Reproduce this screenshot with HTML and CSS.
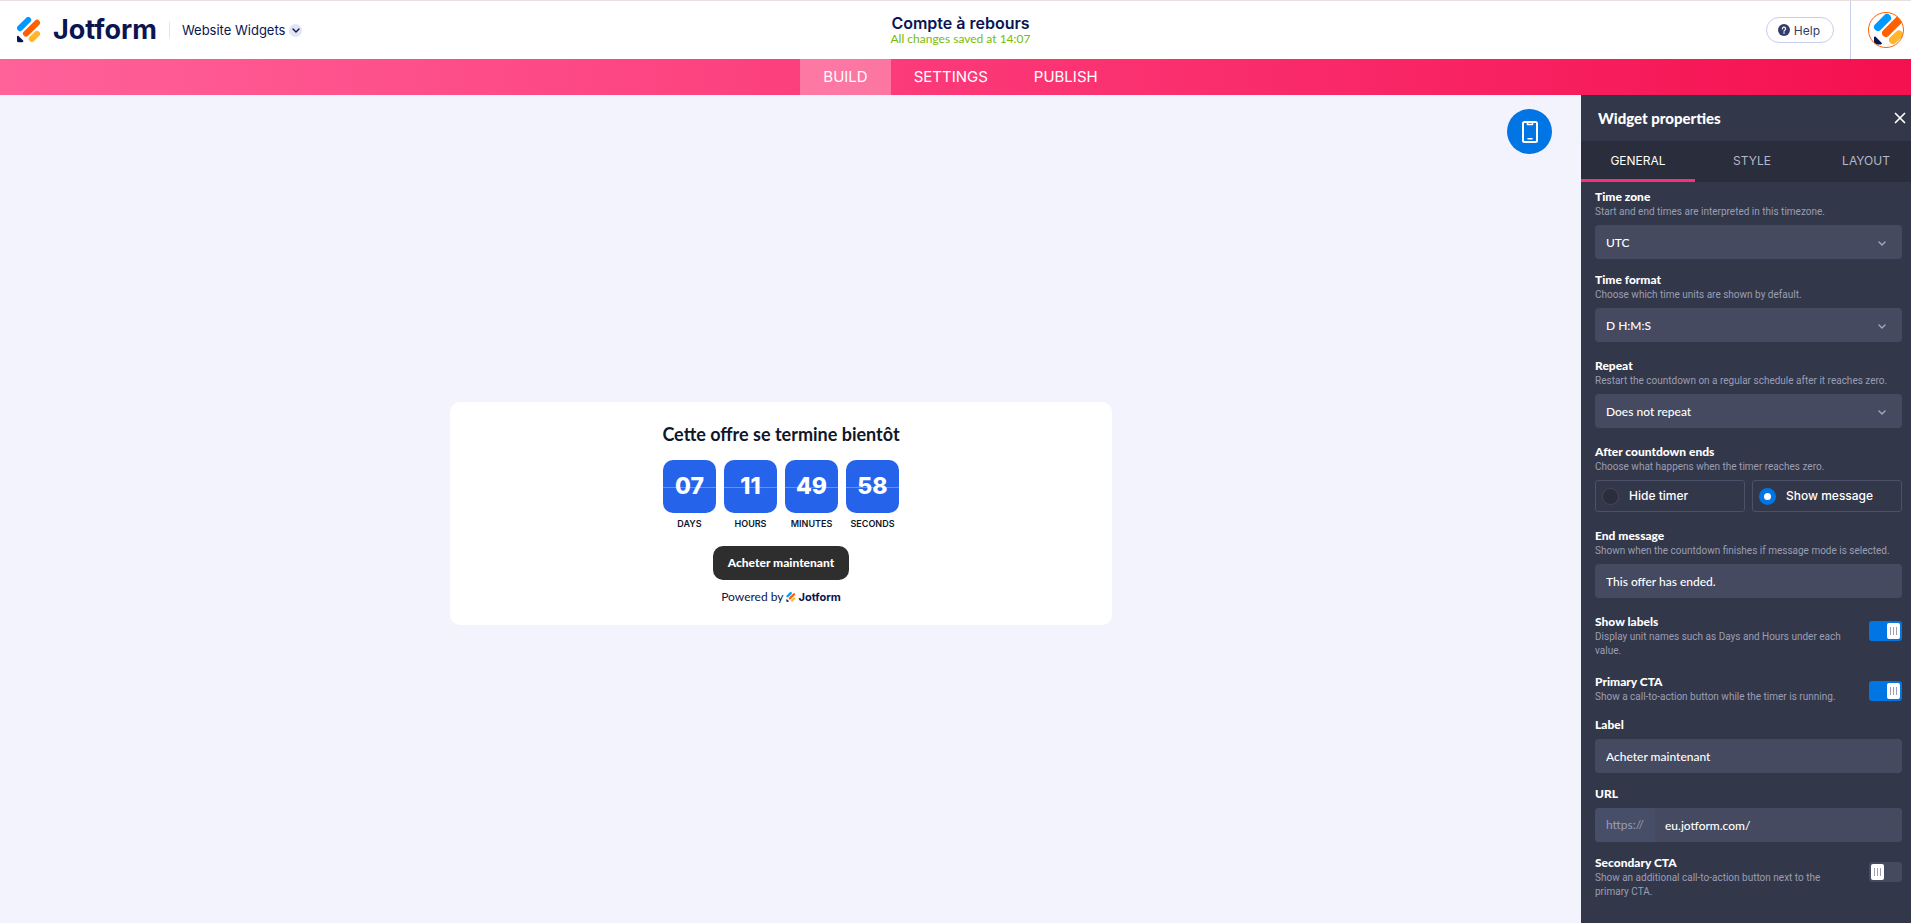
FILE: index.html
```html
<!DOCTYPE html>
<html lang="en">
<head>
  <meta charset="UTF-8" />
  <meta name="viewport" content="width=device-width, initial-scale=1.0"/>
  <title>Compte à rebours - Website Widgets</title>
  <link rel="stylesheet" href="styles.css">
</head>
<body>

  <svg class="sprite" aria-hidden="true">
    <symbol id="logo-mark" viewBox="0 0 24 26">
      <g fill="none" stroke-width="6" stroke-linecap="round">
        <path stroke="#0099ff" d="M3 11.2 11.2 3"/>
        <path stroke="#ff6100" d="M9 16.6 20 5.8"/>
        <path stroke="#ffb629" d="M14.8 22 20 16.9"/>
      </g>
      <path fill="#0a1551" d="M0 19.6c0-.8.9-1.2 1.500-.6l4.600 4.600c.6.6.2 1.600-.7 1.600H1.400C.6 25.200 0 24.600 0 23.800z"/>
    </symbol>
    <symbol id="chevron" viewBox="0 0 12 12">
      <path d="M3 5 6 8 9 5" fill="none" stroke="currentColor" stroke-width="1.400" stroke-linecap="round" stroke-linejoin="round"/>
    </symbol>
  </svg>

  <header>
    <div class="header-left">
      <a class="logo" href="#"><svg width="24" height="26"><use href="#logo-mark"/></svg>Jotform</a>
      <button class="product-menu">Website Widgets <span><svg width="12" height="12"><use href="#chevron"/></svg></span></button>
    </div>
    <div class="header-title">
      <h1>Compte à rebours</h1>
      <p>All changes saved at 14:07</p>
    </div>
    <div class="header-right">
      <button class="help-btn">
        <svg width="12" height="12" viewBox="0 0 12 12"><circle cx="6" cy="6" r="6" fill="#343c6a"/><path d="M4.400 4.800a1.600 1.600 0 1 1 2.300 1.400c-.5.3-.7.5-.7 1" fill="none" stroke="#fff" stroke-width="1.200" stroke-linecap="round"/><circle cx="6" cy="9" r=".8" fill="#fff"/></svg>
        Help
      </button>
      <a class="account" href="#" aria-label="Account">
        <svg width="36" height="36" viewBox="0 0 36 36">
          <defs><clipPath id="round"><circle cx="18" cy="18" r="17.500"/></clipPath></defs>
          <g clip-path="url(#round)" fill="none" stroke-width="8" stroke-linecap="round">
            <path stroke="#0099ff" d="M10 15 19 6"/>
            <path stroke="#ff6100" d="M18 21 32 7"/>
            <path stroke="#ffb629" d="M25 28 31 22.500"/>
            <path fill="#0a1551" stroke="none" d="M6 25.500c0-1 1-1.300 1.600-.7l6 6c.7.7.2 1.700-.8 1.700H6z"/>
          </g>
          <circle cx="18" cy="18" r="17.500" fill="none" stroke="#ff6100"/>
        </svg>
      </a>
    </div>
  </header>

  <nav class="main-nav">
    <a href="#" class="active">BUILD</a>
    <a href="#">SETTINGS</a>
    <a href="#">PUBLISH</a>
  </nav>

  <div class="workspace">
    <main class="canvas">
      <button class="preview-btn" aria-label="Mobile preview">
        <svg width="18" height="24" viewBox="0 0 18 24" fill="none" stroke="#fff" stroke-width="2" stroke-linecap="round" stroke-linejoin="round">
          <rect x="2" y="2" width="14" height="20" rx="1.500"/>
          <path d="M6.500 3v1.500h5V3M7 18.800h4" stroke-width="1.500"/>
        </svg>
      </button>

      <section class="widget">
        <h2>Cette offre se termine bientôt</h2>
        <div class="countdown">
          <div class="unit"><div class="tile">07</div><div class="unit-name">DAYS</div></div>
          <div class="unit"><div class="tile">11</div><div class="unit-name">HOURS</div></div>
          <div class="unit"><div class="tile">49</div><div class="unit-name">MINUTES</div></div>
          <div class="unit"><div class="tile">58</div><div class="unit-name">SECONDS</div></div>
        </div>
        <button class="cta">Acheter maintenant</button>
        <p class="powered">Powered by <a href="#"><svg width="10" height="10"><use href="#logo-mark"/></svg>Jotform</a></p>
      </section>
    </main>

    <aside class="panel">
      <div class="panel-header">
        <h2>Widget properties</h2>
        <button class="close-btn" aria-label="Close">
          <svg width="12" height="12" viewBox="0 0 12 12"><path d="M1.500 1.500l9 9M10.500 1.500l-9 9" stroke="#fff" stroke-width="1.700" stroke-linecap="round"/></svg>
        </button>
      </div>
      <div class="tabs">
        <button class="active">GENERAL</button>
        <button>STYLE</button>
        <button>LAYOUT</button>
      </div>

      <form class="fields">
        <div class="field tight">
          <label for="timezone">Time zone</label>
          <p>Start and end times are interpreted in this timezone.</p>
          <div class="select">
            <select id="timezone"><option>UTC</option></select>
            <svg width="12" height="12"><use href="#chevron"/></svg>
          </div>
        </div>

        <div class="field">
          <label for="format">Time format</label>
          <p>Choose which time units are shown by default.</p>
          <div class="select">
            <select id="format"><option>D H:M:S</option></select>
            <svg width="12" height="12"><use href="#chevron"/></svg>
          </div>
        </div>

        <div class="field">
          <label for="repeat">Repeat</label>
          <p>Restart the countdown on a regular schedule after it reaches zero.</p>
          <div class="select">
            <select id="repeat"><option>Does not repeat</option></select>
            <svg width="12" height="12"><use href="#chevron"/></svg>
          </div>
        </div>

        <fieldset class="field">
          <legend>After countdown ends</legend>
          <p>Choose what happens when the timer reaches zero.</p>
          <div class="radios">
            <label><input type="radio" name="after"> Hide timer</label>
            <label><input type="radio" name="after" checked> Show message</label>
          </div>
        </fieldset>

        <div class="field">
          <label for="message">End message</label>
          <p>Shown when the countdown finishes if message mode is selected.</p>
          <input class="text" type="text" id="message" value="This offer has ended.">
        </div>

        <div class="field switch-row">
          <div>
            <label for="labels">Show labels</label>
            <p>Display unit names such as Days and Hours under each value.</p>
          </div>
          <input class="switch" type="checkbox" id="labels" checked>
        </div>

        <div class="field switch-row tight">
          <div>
            <label for="primary">Primary CTA</label>
            <p>Show a call-to-action button while the timer is running.</p>
          </div>
          <input class="switch" type="checkbox" id="primary" checked>
        </div>

        <div class="field tight">
          <label for="cta-label">Label</label>
          <input class="text" type="text" id="cta-label" value="Acheter maintenant">
        </div>

        <div class="field tight">
          <label for="url">URL</label>
          <div class="url">
            <span>https://</span>
            <input class="text" type="text" id="url" value="eu.jotform.com/">
          </div>
        </div>

        <div class="field switch-row">
          <div>
            <label for="secondary">Secondary CTA</label>
            <p>Show an additional call-to-action button next to the primary CTA.</p>
          </div>
          <input class="switch" type="checkbox" id="secondary">
        </div>
      </form>
    </aside>
  </div>

</body>
</html>
```
FILE: styles.css
```css
* {margin: 0; padding: 0; box-sizing: border-box;}
body {
  font-family: Inter, "Liberation Sans", sans-serif;
  color: #0a1551;
  background: #f3f3fe;
  min-height: 100vh;
  display: flex;
  flex-direction: column;
}
button, input, select {
  font: inherit;
  color: inherit;
  border: none;
  background: none;
}
button {
  cursor: pointer;
}
a {
  color: inherit;
  text-decoration: none;
}
svg {
  display: block;
}
.sprite {
  position: absolute;
  width: 0;
  height: 0;
}

/* Header */
header {
  height: 59px;
  border-top: 1px solid #eadfdf;
  background: #fff;
  display: grid;
  grid-template-columns: 1fr auto 1fr;
}
.header-left {
  display: flex;
  align-items: center;
  padding-left: 17px;
}
.logo {
  display: flex;
  align-items: center;
  gap: 12px;
  font-size: 27px;
  line-height: 32px;
  font-weight: 700;
}
.product-menu {
  display: flex;
  align-items: center;
  gap: 4px;
  margin-left: 12px;
  padding-left: 12px;
  border-left: 1px solid #e3e5f5;
  font-size: 13px;
  line-height: 16px;
}
.product-menu span {
  width: 13px;
  height: 13px;
  border-radius: 50%;
  background: #e3e5f5;
  display: grid;
  place-items: center;
}
.header-title {
  padding: 13px 0 0 10px;
  text-align: center;
}
.header-title h1 {
  font-size: 16px;
  line-height: 18px;
  font-weight: 600;
}
.header-title p {
  font-family: Lato, sans-serif;
  font-size: 12px;
  line-height: 14px;
  color: #78bb07;
}
.header-right {
  display: flex;
  align-items: center;
  justify-content: flex-end;
}
.help-btn {
  display: flex;
  align-items: center;
  gap: 4px;
  height: 26px;
  padding: 0 13px 0 11px;
  margin-right: 16px;
  border: 1px solid #c8ceed;
  border-radius: 13px;
  font-size: 12px;
  color: #343c6a;
}
.account {
  align-self: stretch;
  display: flex;
  align-items: center;
  padding: 0 7px 0 17px;
  border-left: 1px solid #c8ceed;
}

.main-nav {
  height: 36px;
  padding-left: 10px;
  background: linear-gradient(to right, #ff6199, #fb3474 55%, #f5104f);
  display: flex;
  justify-content: center;
}
.main-nav a {
  padding: 0 23px;
  font-size: 15px;
  line-height: 36px;
  color: #fff;
}
.main-nav a.active {
  background: rgba(255, 255, 255, 0.3);
}

.workspace {
  flex: 1;
  display: flex;
}

/* Canvas */
.canvas {
  flex: 1;
  position: relative;
  display: flex;
  align-items: center;
  justify-content: center;
  padding: 8px 19px 0 0;
}
.preview-btn {
  position: absolute;
  top: 14px;
  right: 29px;
  width: 45px;
  height: 45px;
  border-radius: 50%;
  background: #0075e3;
  display: grid;
  place-items: center;
}
.widget {
  width: 662px;
  padding: 20px 24px;
  background: #fff;
  border-radius: 10px;
  display: flex;
  flex-direction: column;
  align-items: center;
}
.widget h2 {
  font-family: Lato, sans-serif;
  font-size: 18px;
  line-height: 24px;
  font-weight: 700;
  color: #0f172a;
}
.countdown {
  display: flex;
  gap: 8px;
  margin-top: 14px;
}
.unit {
  width: 53px;
}
.tile {
  height: 53px;
  border-radius: 10px;
  background: linear-gradient(transparent 27px, rgba(255, 255, 255, 0.3) 27px 28px, transparent 28px), #2563eb;
  color: #fff;
  font-size: 23px;
  line-height: 53px;
  font-weight: 800;
  text-align: center;
}
.unit-name {
  display: flex;
  justify-content: center;
  margin-top: 5px;
  font-size: 9px;
  line-height: 12px;
  font-weight: 600;
  color: #0f172a;
}
.cta {
  height: 34px;
  margin-top: 16px;
  padding: 0 15px;
  border-radius: 10px;
  background: #2e2e2e;
  color: #fff;
  font-family: Lato, sans-serif;
  font-size: 12px;
  font-weight: 900;
}
.powered {
  display: flex;
  align-items: center;
  gap: 3px;
  margin-top: 9px;
  font-family: Lato, sans-serif;
  font-size: 12px;
  line-height: 16px;
}
.powered a {
  display: flex;
  align-items: center;
  gap: 2px;
  font-family: Inter, sans-serif;
  font-size: 11px;
  font-weight: 700;
}

/* Properties panel */
.panel {
  width: 330px;
  background: #33374a;
  color: #fff;
  overflow: hidden;
  font-family: Lato, sans-serif;
}
.panel-header {
  height: 46px;
  padding: 0 5px 0 17px;
  display: flex;
  align-items: center;
  justify-content: space-between;
}
.panel-header h2 {
  font-size: 15px;
  line-height: 18px;
  font-weight: 900;
}
.tabs {
  display: flex;
  background: #2a2d3b;
}
.tabs button {
  flex: 0 0 114px;
  height: 41px;
  border-bottom: 3px solid transparent;
  font-family: Inter, sans-serif;
  font-size: 12px;
  color: #b5b8c8;
}
.tabs button.active {
  color: #fff;
  border-color: #ff2d78;
}
.fields {
  padding: 7px 9px 6px 14px;
}
.field {
  border: none;
  margin-bottom: 16px;
}
.field.tight {
  margin-bottom: 13px;
}
.field:last-child {
  margin-bottom: 0;
}
.field label, .field legend {
  display: block;
  font-size: 12px;
  line-height: 16px;
  font-weight: 900;
}
.field p {
  font-family: Roboto, sans-serif;
  font-size: 10px;
  line-height: 14px;
  color: #9a9eb3;
}
.text, .select select {
  display: block;
  width: 100%;
  height: 34px;
  padding: 0 11px;
  border-radius: 4px;
  background: #454a60;
  font-size: 12px;
  font-weight: 500;
  appearance: none;
}
.select, .field > .text, .radios, .url {
  margin-top: 6px;
}
.select {
  position: relative;
}
.select svg {
  position: absolute;
  right: 14px;
  top: 12px;
  color: #a5a9bd;
  pointer-events: none;
}
.radios {
  display: flex;
  gap: 7px;
}
.radios label {
  flex: 1;
  display: flex;
  align-items: center;
  gap: 10px;
  height: 32px;
  padding: 0 6px;
  border: 1px solid #4c5069;
  border-radius: 3px;
  font-family: Inter, sans-serif;
  font-size: 12px;
  font-weight: 500;
}
.radios input {
  appearance: none;
  width: 17px;
  height: 17px;
  border: 1px solid #434760;
  border-radius: 50%;
  background: #2a2d3b;
}
.radios input:checked {
  border: 5px solid #0075e3;
  background: #fff;
}
.switch-row {
  display: flex;
  align-items: flex-start;
  justify-content: space-between;
  gap: 24px;
}
.switch {
  appearance: none;
  flex: none;
  display: flex;
  width: 33px;
  height: 20px;
  margin-top: 7px;
  padding: 2px;
  border-radius: 3px;
  background: #454a60;
}
.switch::before {
  content: "";
  width: 13px;
  height: 16px;
  border-radius: 2px;
  background: repeating-linear-gradient(to right, #9a9eb3 0 1px, #fff 1px 3px) 3px 4px / 7px 8px no-repeat, #fff;
}
.switch:checked {
  justify-content: flex-end;
  background: #0075e3;
}
.url {
  display: flex;
  border-radius: 4px;
  overflow: hidden;
  background: #454a60;
}
.url span {
  width: 60px;
  flex: none;
  padding-left: 11px;
  background: #474e68;
  font-size: 12px;
  line-height: 34px;
  color: #9a9eb3;
}
.url .text {
  padding: 0 10px;
  border-radius: 0;
}
```
